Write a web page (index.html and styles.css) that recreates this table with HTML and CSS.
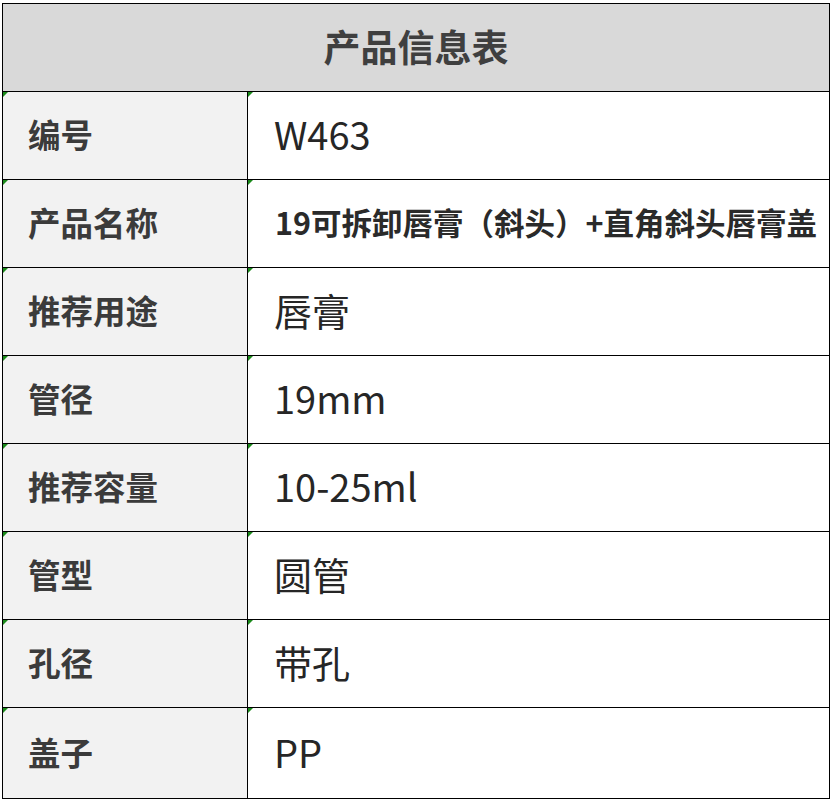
FILE: index.html
```html
<!DOCTYPE html>
<html lang="zh-CN">
<head>
<meta charset="utf-8">
<title>产品信息表</title>
<link rel="stylesheet" href="styles.css">
</head>
<body>
<table class="info">
  <colgroup><col class="c-label"><col class="c-value"></colgroup>
  <thead>
    <tr class="head-row"><th colspan="2" class="title">产品信息表</th></tr>
  </thead>
  <tbody>
    <tr><td class="label">编号</td><td class="value">W463</td></tr>
    <tr><td class="label">产品名称</td><td class="value name">19可拆卸唇膏（斜头）+直角斜头唇膏盖</td></tr>
    <tr><td class="label">推荐用途</td><td class="value">唇膏</td></tr>
    <tr><td class="label">管径</td><td class="value">19mm</td></tr>
    <tr><td class="label">推荐容量</td><td class="value">10-25ml</td></tr>
    <tr><td class="label">管型</td><td class="value">圆管</td></tr>
    <tr><td class="label">孔径</td><td class="value">带孔</td></tr>
    <tr class="last"><td class="label">盖子</td><td class="value">PP</td></tr>
  </tbody>
</table>
</body>
</html>
```
FILE: styles.css
```css
html, body {
  margin: 0;
  padding: 0;
  background: #ffffff;
}
body {
  padding: 3px 0 0 2px;
  font-family: "Noto Sans CJK SC", "Noto Sans", sans-serif;
}
.info {
  border-collapse: collapse;
  width: 828px;
  table-layout: fixed;
}
.c-label { width: 245px; }
.info th, .info td {
  border: 1px solid #000;
  padding: 0;
  position: relative;
  vertical-align: middle;
}
.head-row { height: 88px; }
.info tbody tr { height: 88px; }
.info tbody tr.last { height: 91px; }
.title {
  background: #d9d9d9;
  color: #3f3f3f;
  font-size: 37px;
  font-weight: 700;
  text-align: center;
  line-height: 1;
  padding-bottom: 2px !important;
}
.label {
  background: #f2f2f2;
  color: #3b3b3b;
  font-size: 32.5px;
  font-weight: 700;
  padding-left: 25px !important;
  padding-bottom: 2px !important;
  line-height: 1;
}
.value {
  background: #ffffff;
  color: #262626;
  font-size: 38px;
  font-weight: 400;
  padding-left: 26px !important;
  padding-bottom: 3px !important;
  line-height: 1;
  white-space: nowrap;
}
.value.name {
  font-size: 30.5px;
  font-weight: 700;
  color: #2a2a2a;
  padding-left: 27px !important;
}
.info tbody td::before {
  content: "";
  position: absolute;
  top: 0;
  left: 0;
  width: 0;
  height: 0;
  border-top: 5px solid #1a8a1a;
  border-right: 5px solid transparent;
}
```
